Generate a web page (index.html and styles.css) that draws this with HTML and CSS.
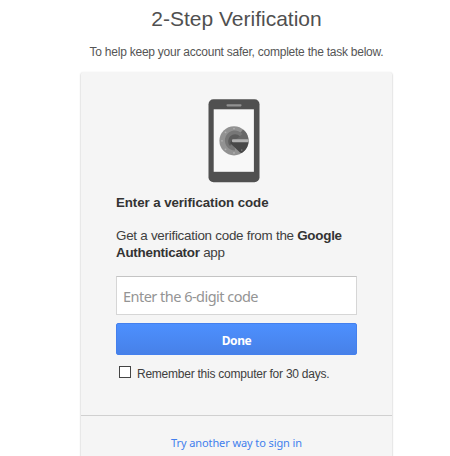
FILE: index.html
```html
<!DOCTYPE html>
<html lang="en">
<head>
<meta charset="utf-8">
<title>2-Step Verification</title>
<link rel="stylesheet" href="styles.css">
</head>
<body>
<main class="page">
  <h1 class="title">2-Step Verification</h1>
  <p class="subtitle">To help keep your account safer, complete the task below.</p>
  <section class="card">
    <form class="challenge">
      <svg class="phone" width="52" height="84" viewBox="0 0 52 84" aria-hidden="true">
        <rect x="0.5" y="0.3" width="51" height="83" rx="5" fill="#505050"/>
        <rect x="18.5" y="5.2" width="15" height="2.2" rx="0.8" fill="#929292"/>
        <rect x="5.7" y="10.3" width="40.2" height="62.5" fill="#f8f8f8"/>
        <circle cx="26" cy="41.8" r="14.6" fill="#929292"/>
        <path d="M26 41.8 L35 30.5 A14.6 14.6 0 0 1 40.6 41.8 Z" fill="#686868"/>
        <path d="M34.5 35 A10 10 0 1 0 27 51.5 L26 41.8 Z" fill="#777"/>
        <path d="M32 37.5 A6.5 6.5 0 1 0 22 47 L26 41.8 Z" fill="#5c5c5c"/>
        <path d="M24 41.8 H40.6 A14.6 14.6 0 0 1 34.5 53.6 Q33 54.6 31.5 53 L22 44 Z" fill="#484848"/>
        <rect x="24" y="40.2" width="16.6" height="3" rx="1" fill="#b2b2b2"/>
        <g fill="#b0b0b0">
          <circle cx="26" cy="29.6" r=".9"/><circle cx="17.5" cy="33.3" r=".9"/>
          <circle cx="14" cy="41.8" r=".9"/><circle cx="17.5" cy="50.3" r=".9"/>
          <circle cx="26" cy="53.9" r=".9"/><circle cx="33.8" cy="51" r=".6"/>
        </g>
      </svg>
      <h2 class="heading">Enter a verification code</h2>
      <p class="hint">Get a verification code from the <b>Google<br>Authenticator</b> app</p>
      <input class="code" type="text" placeholder="Enter the 6-digit code" aria-label="Enter the 6-digit code">
      <button class="done" type="button">Done</button>
      <label class="remember"><input class="box" type="checkbox"><span>Remember this computer for 30 days.</span></label>
    </form>
    <footer class="other"><a class="link" href="#">Try another way to sign in</a></footer>
  </section>
</main>
</body>
</html>
```

FILE: styles.css
```css
* { box-sizing: border-box; }
body {
  margin: 0;
  background: #fff;
  color: #404040;
  font-family: "Liberation Sans", Arial, sans-serif;
  overflow: hidden;
}
.page { width: 311px; margin-left: 81px; }
.title {
  margin: 0;
  padding-top: 7px;
  font-size: 21px;
  line-height: 24px;
  font-weight: 400;
  text-align: center;
  color: #505050;
}
.subtitle {
  margin: 13px 0 12px;
  font-size: 12px;
  line-height: 16px;
  letter-spacing: -.24px;
  text-align: center;
  white-space: nowrap;
  color: #555;
}
.card {
  height: 400px;
  background: #f5f5f5;
  border-radius: 2px;
  box-shadow: 0 1px 2px rgba(0, 0, 0, .35);
}
.challenge {
  display: flex;
  flex-direction: column;
  height: 343px;
  padding: 27px 35px 0;
}
.phone { align-self: center; margin-right: 5px; flex: none; }
.heading {
  margin: 12px 0 0;
  font-size: 13.3px;
  line-height: 16px;
  letter-spacing: -.08px;
  white-space: nowrap;
  color: #333;
}
.hint {
  margin: 16px 0 0;
  font-size: 13.4px;
  line-height: 17px;
  letter-spacing: -.26px;
  white-space: nowrap;
}
.hint b { color: #333; }
.code {
  width: 241px;
  height: 39px;
  margin: 15px 0 0;
  padding: 0 6px;
  border: 1px solid #d6d6d6;
  border-top-color: #c4c4c4;
  background: #fff;
  font: 14.5px "Noto Sans", sans-serif;
  letter-spacing: -.52px;
  flex: none;
}
.code::placeholder { color: #949494; opacity: 1; }
.done {
  width: 241px;
  height: 32px;
  margin: 8px 0 0;
  padding: 3px 0 0;
  border: 1px solid #4480ee;
  border-radius: 2px;
  background: linear-gradient(#4d90fe, #4781e8);
  color: #fff;
  font: bold 12px "Noto Sans", sans-serif;
  letter-spacing: -.4px;
  flex: none;
}
.remember {
  display: flex;
  align-items: center;
  gap: 6px;
  margin: 9px 0 0 3px;
  height: 16px;
  font-size: 12px;
  letter-spacing: -.24px;
  white-space: nowrap;
}
.remember span { padding-top: 3px; }
.box {
  appearance: none;
  width: 12px;
  height: 12px;
  margin: 0;
  border: 1px solid #444;
  background: #fff;
}
.other {
  padding-top: 17px;
  border-top: 1px solid #d0d0d0;
  text-align: center;
}
.link {
  font: 11px/16px "Noto Sans", sans-serif;
  letter-spacing: -.1px;
  color: #427fed;
  text-decoration: none;
}
```
